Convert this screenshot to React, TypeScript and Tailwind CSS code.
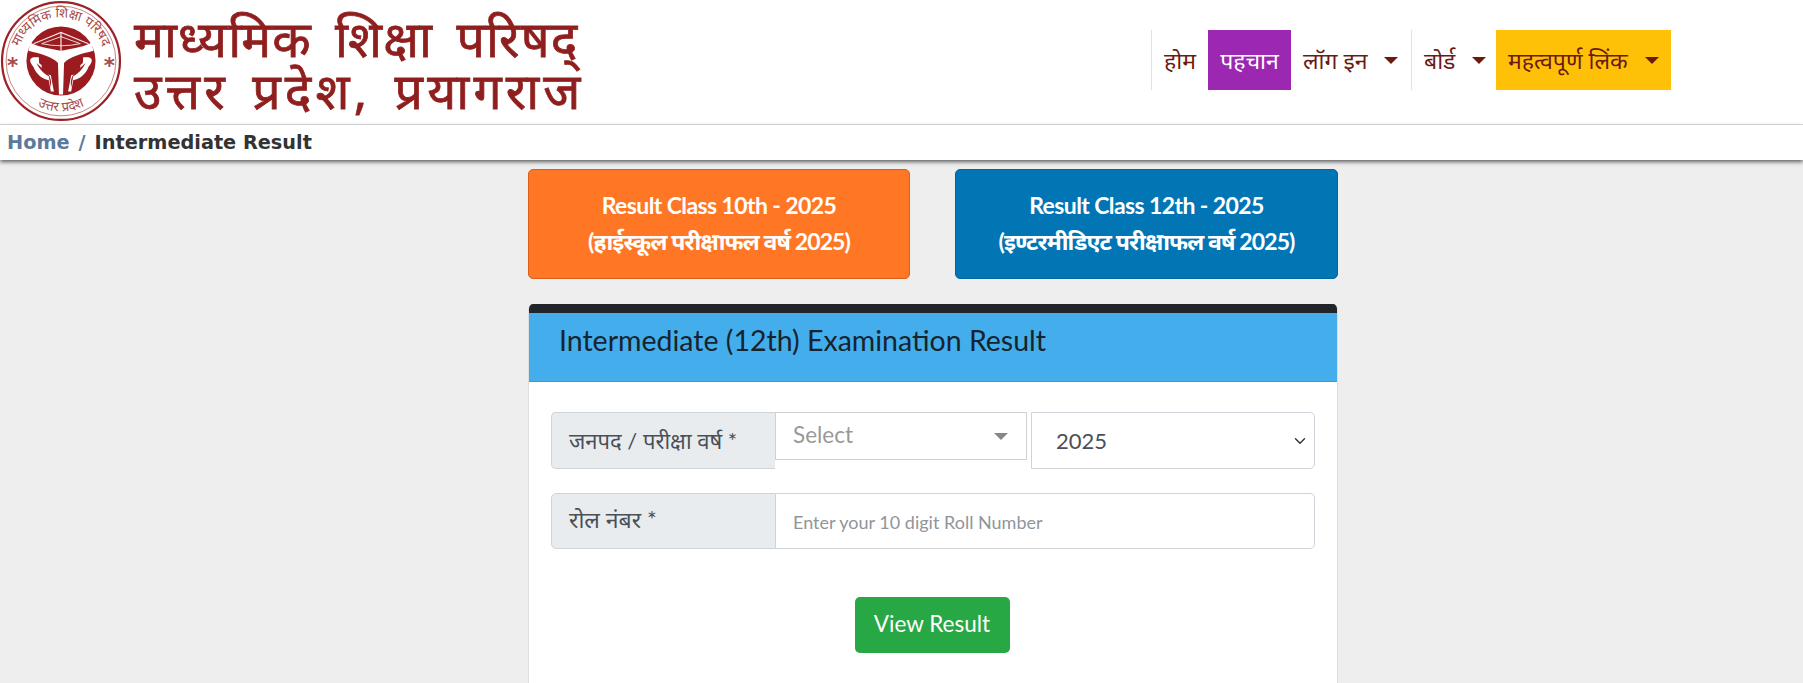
import { ChevronDown } from "lucide-react";

const FONT = "font-['Lato','Noto_Sans','Noto_Sans_Devanagari',sans-serif]";

function Caret({ className = "" }: { className?: string }) {
  return <span className={`inline-block border-x-[7px] border-t-[7px] border-x-transparent border-t-[#6b1a12] ${className}`} />;
}

function Emblem() {
  return (
    <svg viewBox="0 0 120 120" className="w-[122px] h-[122px] shrink-0 -mt-[2px]">
      <defs>
        <path id="ring-top" d="M 18 72 A 43.5 43.5 0 1 1 102 72" />
        <path id="ring-bottom" d="M 24 94 A 49.5 49.5 0 0 0 96 94" />
      </defs>
      <circle cx="60" cy="60" r="58" fill="#fff" stroke="#9b2226" strokeWidth="2.2" />
      <circle cx="60" cy="60" r="54" fill="none" stroke="#c27a7a" strokeWidth="0.9" />
      <text fontSize="13" fill="#a8494b" fontFamily="Noto Sans, sans-serif">
        <textPath href="#ring-top" startOffset="50%" textAnchor="middle">माध्यमिक शिक्षा परिषद</textPath>
      </text>
      <text fontSize="13" fill="#a8494b" fontFamily="Noto Sans, sans-serif">
        <textPath href="#ring-bottom" startOffset="50%" textAnchor="middle">उत्तर प्रदेश</textPath>
      </text>
      <text x="12.5" y="72" fontSize="21" fontWeight="700" textAnchor="middle" fill="#a8494b" fontFamily="DejaVu Sans, sans-serif">*</text>
      <text x="107.5" y="72" fontSize="21" fontWeight="700" textAnchor="middle" fill="#a8494b" fontFamily="DejaVu Sans, sans-serif">*</text>
      <circle cx="60" cy="60" r="34" fill="#9b1c20" />
      {/* bow on top */}
      <path d="M33 43 L60 32 L87 43" fill="none" stroke="#f6e6e6" strokeWidth="1.2" />
      <path d="M41 43 L60 36 L79 43 Q60 47 41 43 Z" fill="none" stroke="#f6e6e6" strokeWidth="0.9" />
      <path d="M60 32 L60 52" stroke="#f6e6e6" strokeWidth="1.2" />
      {/* Y shape */}
      <path d="M30 42 C40 47 52 48 60 50 C68 48 80 47 90 42 L92 50 C80 53 68 56 63 62 L62 93 L58 93 L57 62 C52 56 40 53 28 50 Z" fill="#fff" />
      {/* hands */}
      <path d="M30 58 C33 55 36 57 38 56 C39 60 37 62 41 64 C40 69 45 73 50 74 L53 90 L50 90 L48 79 C41 78 35 72 33 66 C31 63 29 61 30 58 Z" fill="#fff" />
      <path d="M90 58 C87 55 84 57 82 56 C81 60 83 62 79 64 C80 69 75 73 70 74 L67 90 L70 90 L72 79 C79 78 85 72 87 66 C89 63 91 61 90 58 Z" fill="#fff" />
      <path d="M36 62 C38 67 42 72 48 75 L50 86 C51 80 50 74 44 69 C41 67 38 64 36 62 Z" fill="#9b1c20" />
      <path d="M84 62 C82 67 78 72 72 75 L70 86 C69 80 70 74 76 69 C79 67 82 64 84 62 Z" fill="#9b1c20" />
    </svg>
  );
}

function NavItem({ label, caret, className = "" }: { label: string; caret?: boolean; className?: string }) {
  return (
    <a className={`flex items-center h-full text-[23px] text-[#6b1a12] ${className}`}>
      <span>{label}</span>
      {caret && <Caret className="ml-[17px]" />}
    </a>
  );
}

function ResultCard({ line1, line2, className }: { line1: string; line2: string; className: string }) {
  return (
    <a className={`h-[110px] pb-[2px] rounded-[5px] border flex flex-col items-center justify-center text-white font-bold text-[23px] leading-[36px] ${className}`}>
      <span className="tracking-[-0.6px]">{line1}</span>
      <span className="tracking-[-0.9px]">{line2}</span>
    </a>
  );
}

export default function App() {
  return (
    <div className={`h-[683px] overflow-hidden bg-[#eeeeee] ${FONT}`}>
      {/* Header */}
      <header className="bg-white h-[125px] flex items-center justify-between border-b border-[#dddddd]">
        <div className="flex items-center h-[124px]">
          <Emblem />
          <div className="ml-[12px] mt-[4px] text-[#8f1f1f] text-[50px] leading-[52px] [-webkit-text-stroke:0.8px_#8f1f1f] font-['Noto_Sans','Noto_Sans_Devanagari',serif] whitespace-nowrap">
            <div className="tracking-[1.2px] [word-spacing:9px]">माध्यमिक शिक्षा परिषद्</div>
            <div className="tracking-[4.2px] [word-spacing:6px]">उत्तर प्रदेश, प्रयागराज</div>
          </div>
        </div>
        <nav className="flex h-[60px] mr-[132px] mb-[4px]">
          <NavItem label="होम" className="w-[57px] justify-center border-l border-[#e2e2e2]" />
          <NavItem label="पहचान" className="w-[83px] justify-center bg-[#9c27b0] !text-white" />
          <NavItem label="लॉग इन" caret className="w-[120px] pl-[12px]" />
          <NavItem label="बोर्ड" caret className="w-[85px] pl-[12px] border-l border-[#e2e2e2]" />
          <NavItem label="महत्वपूर्ण लिंक" caret className="w-[175px] pl-[12px] bg-[#ffc107]" />
        </nav>
      </header>

      {/* Breadcrumb */}
      <div className="bg-white h-[35px] flex items-center pl-[7px] pt-[2px] shadow-[0_2px_4px_rgba(0,0,0,0.6)] relative font-['DejaVu_Sans',sans-serif] font-bold text-[19.3px]">
        <a className="text-[#5a7a9c]">Home</a>
        <span className="text-[#5a7a9c] mx-[9px]">/</span>
        <span className="text-[#333333]">Intermediate Result</span>
      </div>

      {/* Main column */}
      <main className="w-[810px] ml-[528px] pt-[9px]">
        <div className="flex justify-between">
          <ResultCard line1="Result Class 10th - 2025" line2="(हाईस्कूल परीक्षाफल वर्ष 2025)" className="w-[382px] bg-[#ff7724] border-[#d9601a]" />
          <ResultCard line1="Result Class 12th - 2025" line2="(इण्टरमीडिएट परीक्षाफल वर्ष 2025)" className="w-[383px] bg-[#0275b5] border-[#02659c]" />
        </div>

        <section className="mt-[25px] bg-white border border-[#dfdfdf] border-t-0 rounded-t-[5px] overflow-hidden h-[400px]">
          <div className="h-[9px] bg-[#212529]" />
          <div className="h-[69px] bg-[#43aeeb] border-b border-[#3a9dd4] flex items-center pl-[30px] pb-[13px] text-[28.5px] text-[#17232e]">
            Intermediate (12th) Examination Result
          </div>
          <div className="px-[22px] pt-[30px]">
            <div className="flex items-start">
              <label className="w-[224px] h-[57px] flex items-center pl-[17px] pb-[1px] bg-[#e9ecef] border border-[#ced4da] border-r-0 rounded-l-[5px] text-[22px] text-[#495057]">
                जनपद / परीक्षा वर्ष *
              </label>
              <div className="w-[252px] h-[48px] flex items-center justify-between pl-[17px] pr-[18px] border border-[#d0d0d0] text-[22.5px] text-[#999999]">
                <span className="-mt-[3px]">Select</span>
                <span className="border-x-[7px] border-t-[7px] border-x-transparent border-t-[#888888]" />
              </div>
              <div className="ml-[4px] flex-1 h-[57px] flex items-center justify-between pl-[24px] pr-[5px] border border-[#ced4da] rounded-r-[5px] text-[22px] text-[#495057]">
                <span>2025</span>
                <ChevronDown size={18} strokeWidth={2} className="text-[#343a40]" />
              </div>
            </div>

            <div className="flex mt-[24px] h-[56px]">
              <label className="w-[225px] flex items-center pl-[17px] pb-[4px] bg-[#e9ecef] border border-[#ced4da] rounded-l-[5px] text-[23px] text-[#495057]">
                रोल नंबर *
              </label>
              <input
                placeholder="Enter your 10 digit Roll Number"
                className="flex-1 pl-[17px] pt-[2px] border border-l-0 border-[#ced4da] rounded-r-[5px] text-[18px] text-[#495057] placeholder:text-[#8f959b] outline-none"
              />
            </div>

            <div className="flex justify-center mt-[48px]">
              <button className="w-[155px] h-[56px] mr-[2px] pb-[2px] bg-[#28a745] rounded-[5px] text-white text-[22.5px]">View Result</button>
            </div>
          </div>
        </section>
      </main>
    </div>
  );
}
